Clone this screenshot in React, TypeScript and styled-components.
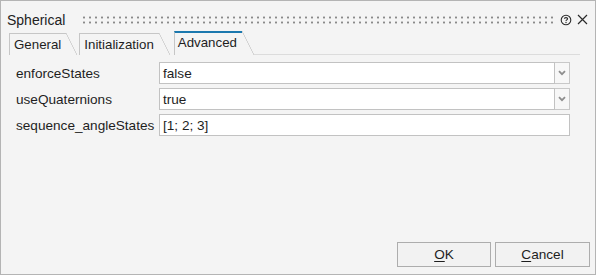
import React from "react";
import styled, { createGlobalStyle } from "styled-components";

const Global = createGlobalStyle`
  html, body { margin: 0; padding: 0; background: #ffffff; }
  body { font-family: "Liberation Sans", Arial, sans-serif; }
  * { box-sizing: border-box; }
`;

const Window = styled.div`
  width: 596px;
  height: 275px;
  border: 1px solid #b4b4b4;
  background: #f4f4f4;
  display: flex;
  flex-direction: column;
  color: #1e1e1e;
  font-size: 13.6px;
`;

const TitleBar = styled.div`
  height: 30px;
  padding: 6px 7px 0 6px;
  display: flex;
  align-items: center;
`;

const TitleBarInner = styled.div`
  height: 24px;
  flex: 1;
  display: flex;
  align-items: center;
`;

const Title = styled.div`
  font-size: 14px;
  color: #222;
  margin-right: 16px;
  line-height: 16px;
  margin-top: 1px;
`;

const Grip = styled.div`
  flex: 1;
  height: 10px;
  margin-top: 1px;
  background-image: radial-gradient(circle, #8a8a8a 1px, transparent 1.2px);
  background-size: 6px 5px;
  background-position: 0 0;
  margin-right: 6px;
`;

const IconButton = styled.div<{ $gap?: number }>`
  display: flex;
  align-items: center;
  justify-content: center;
  margin-left: ${(p) => p.$gap ?? 0}px;
  margin-top: 1px;
`;

const TabStrip = styled.div`
  height: 24px;
  margin-left: 8px;
  display: flex;
  align-items: flex-end;
`;

const Tab = styled.div<{ $active?: boolean }>`
  display: flex;
  height: ${(p) => (p.$active ? "24px" : "22px")};
  margin-right: ${(p) => (p.$active ? "0" : "2px")};
  margin-left: ${(p) => (p.$active ? "2px" : "0")};
`;

const TabBody = styled.div<{ $active?: boolean }>`
  border-left: 1px solid #c6c6c6;
  border-top: ${(p) => (p.$active ? "2px solid #1b78ae" : "1px solid #c6c6c6")};
  padding: ${(p) => (p.$active ? "2px 5px 0 3px" : "3px 5px 0 4px")};
  line-height: 16px;
  font-size: 13.3px;
  color: #1e1e1e;
`;

const TabSlant = styled.div<{ $w: number }>`
  width: ${(p) => p.$w}px;
  background: linear-gradient(
    to top right,
    transparent calc(50% - 0.7px),
    #c6c6c6 50%,
    transparent calc(50% + 0.7px)
  );
`;

const StripLine = styled.div`
  flex: 1;
  height: 1px;
  background: #dcdcdc;
  margin-right: 15px;
`;

const Content = styled.div`
  padding: 7px 0 0 15px;
  display: grid;
  grid-template-columns: 143px 411px;
  grid-auto-rows: 22px;
  row-gap: 4px;
`;

const Label = styled.div`
  display: flex;
  align-items: center;
  white-space: nowrap;
  color: #1e1e1e;
`;

const FieldBox = styled.div`
  display: flex;
  height: 22px;
`;

const TextBox = styled.div`
  flex: 1;
  border: 1px solid #c2c2c2;
  background: #ffffff;
  padding-left: 3px;
  display: flex;
  align-items: center;
  color: #1e1e1e;
`;

const DropButton = styled.div`
  width: 15px;
  border: 1px solid #c8c8c8;
  border-left: none;
  background: #f7f7f7;
  display: flex;
  align-items: center;
  justify-content: center;
`;

const Footer = styled.div`
  margin-top: auto;
  display: flex;
  justify-content: flex-end;
  gap: 4px;
  padding: 0 5px 7px 0;
`;

const Button = styled.div<{ $w: number }>`
  width: ${(p) => p.$w}px;
  height: 25px;
  border: 1px solid #adadad;
  background: #f2f2f2;
  display: flex;
  align-items: center;
  justify-content: center;
  color: #1e1e1e;
`;

const Mnemonic = styled.span`
  text-decoration: underline;
  text-underline-offset: 2px;
`;

const Chevron = () => (
  <svg width="8" height="6" viewBox="0 0 8 6">
    <path d="M1 1.2 L4 4.2 L7 1.2" fill="none" stroke="#8e8e8e" strokeWidth="1.8" />
  </svg>
);

const HelpIcon = () => (
  <svg width="12" height="12" viewBox="0 0 12 12">
    <circle cx="6" cy="6" r="4.8" fill="none" stroke="#2a2a2a" strokeWidth="1.1" />
    <path d="M4.4 4.8 C4.4 3.2 7.6 3.2 7.6 4.8 C7.6 5.9 6 5.9 6 7" fill="none" stroke="#2a2a2a" strokeWidth="1.1" />
    <circle cx="6" cy="8.5" r="0.7" fill="#2a2a2a" />
  </svg>
);

const CloseIcon = () => (
  <svg width="11" height="11" viewBox="0 0 11 11">
    <path d="M1 1 L10 10 M10 1 L1 10" stroke="#2a2a2a" strokeWidth="1.2" />
  </svg>
);

const rows = [
  { label: "enforceStates", value: "false", drop: true },
  { label: "useQuaternions", value: "true", drop: true },
  { label: "sequence_angleStates", value: "[1; 2; 3]", drop: false },
];

export default function App() {
  return (
    <>
      <Global />
      <Window>
        <TitleBar>
          <TitleBarInner>
            <Title>Spherical</Title>
            <Grip />
            <IconButton>
              <HelpIcon />
            </IconButton>
            <IconButton $gap={5}>
              <CloseIcon />
            </IconButton>
          </TitleBarInner>
        </TitleBar>
        <TabStrip>
          <Tab>
            <TabBody>General</TabBody>
            <TabSlant $w={11} />
          </Tab>
          <Tab>
            <TabBody>Initialization</TabBody>
            <TabSlant $w={11} />
          </Tab>
          <Tab $active>
            <TabBody $active>Advanced</TabBody>
            <TabSlant $w={12} />
          </Tab>
          <StripLine />
        </TabStrip>
        <Content>
          {rows.map((r) => (
            <React.Fragment key={r.label}>
              <Label>{r.label}</Label>
              <FieldBox>
                <TextBox>{r.value}</TextBox>
                {r.drop && (
                  <DropButton>
                    <Chevron />
                  </DropButton>
                )}
              </FieldBox>
            </React.Fragment>
          ))}
        </Content>
        <Footer>
          <Button $w={94}>
            <Mnemonic>O</Mnemonic>K
          </Button>
          <Button $w={95}>
            <Mnemonic>C</Mnemonic>ancel
          </Button>
        </Footer>
      </Window>
    </>
  );
}
